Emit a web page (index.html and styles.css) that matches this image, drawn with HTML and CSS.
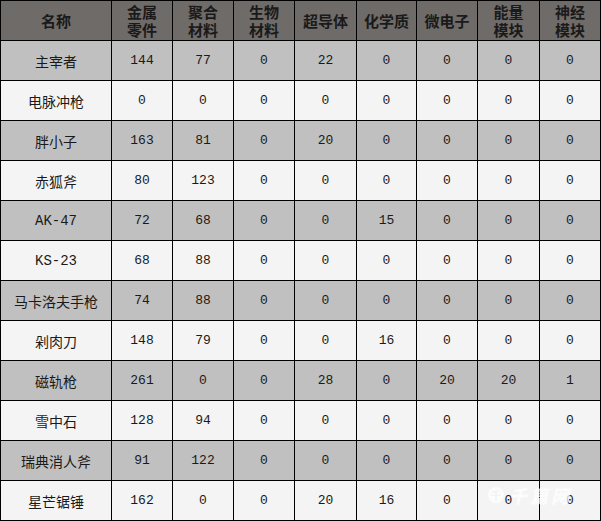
FILE: index.html
```html
<!DOCTYPE html>
<html lang="zh-CN">
<head>
<meta charset="utf-8">
<title>材料表</title>
<link rel="stylesheet" href="styles.css">
</head>
<body>
<div class="wrap">
<table class="mats">
  <colgroup>
    <col class="c-name"><col class="c60"><col class="c60"><col class="c60"><col class="c61"><col class="c59"><col class="c60"><col class="c61"><col class="c60">
  </colgroup>
  <thead>
    <tr>
      <th>名称</th>
      <th><span class="l">金属</span><span class="l">零件</span></th>
      <th><span class="l">聚合</span><span class="l">材料</span></th>
      <th><span class="l">生物</span><span class="l">材料</span></th>
      <th>超导体</th>
      <th>化学质</th>
      <th>微电子</th>
      <th><span class="l">能量</span><span class="l">模块</span></th>
      <th><span class="l">神经</span><span class="l">模块</span></th>
    </tr>
  </thead>
  <tbody>
    <tr class="g"><td class="n">主宰者</td><td>144</td><td>77</td><td>0</td><td>22</td><td>0</td><td>0</td><td>0</td><td>0</td></tr>
    <tr class="w"><td class="n">电脉冲枪</td><td>0</td><td>0</td><td>0</td><td>0</td><td>0</td><td>0</td><td>0</td><td>0</td></tr>
    <tr class="g"><td class="n">胖小子</td><td>163</td><td>81</td><td>0</td><td>20</td><td>0</td><td>0</td><td>0</td><td>0</td></tr>
    <tr class="w"><td class="n">赤狐斧</td><td>80</td><td>123</td><td>0</td><td>0</td><td>0</td><td>0</td><td>0</td><td>0</td></tr>
    <tr class="g"><td class="n">AK-47</td><td>72</td><td>68</td><td>0</td><td>0</td><td>15</td><td>0</td><td>0</td><td>0</td></tr>
    <tr class="w"><td class="n">KS-23</td><td>68</td><td>88</td><td>0</td><td>0</td><td>0</td><td>0</td><td>0</td><td>0</td></tr>
    <tr class="g"><td class="n">马卡洛夫手枪</td><td>74</td><td>88</td><td>0</td><td>0</td><td>0</td><td>0</td><td>0</td><td>0</td></tr>
    <tr class="w"><td class="n">剁肉刀</td><td>148</td><td>79</td><td>0</td><td>0</td><td>16</td><td>0</td><td>0</td><td>0</td></tr>
    <tr class="g"><td class="n">磁轨枪</td><td>261</td><td>0</td><td>0</td><td>28</td><td>0</td><td>20</td><td>20</td><td>1</td></tr>
    <tr class="w"><td class="n">雪中石</td><td>128</td><td>94</td><td>0</td><td>0</td><td>0</td><td>0</td><td>0</td><td>0</td></tr>
    <tr class="g"><td class="n">瑞典消人斧</td><td>91</td><td>122</td><td>0</td><td>0</td><td>0</td><td>0</td><td>0</td><td>0</td></tr>
    <tr class="w"><td class="n">星芒锯锤</td><td>162</td><td>0</td><td>0</td><td>20</td><td>16</td><td>0</td><td>0</td><td>0</td></tr>
  </tbody>
</table>
<div class="mark"><span class="mark-icon">千</span><span class="mark-text">千篇网</span></div>
</div>
</body>
</html>
```

FILE: styles.css
```css
html, body {
  margin: 0;
  padding: 0;
  background: #ffffff;
}

.wrap {
  position: relative;
  width: 601px;
  height: 521px;
}

.mats {
  border-collapse: separate;
  border-spacing: 1px;
  background: #000000;
  table-layout: fixed;
  width: 601px;
}

.c-name { width: 110px; }
.c60 { width: 60px; }
.c61 { width: 61px; }
.c59 { width: 59px; }

.mats th,
.mats td {
  padding: 0;
  height: 39px;
  text-align: center;
  vertical-align: middle;
  overflow: hidden;
  white-space: nowrap;
}

.mats th {
  background: #6f6b68;
  color: #1a1a1a;
  font-family: "Noto Sans CJK SC", "Noto Sans", sans-serif;
  font-weight: 700;
  font-size: 15px;
  line-height: 18px;
}

.mats th .l {
  display: block;
  height: 18px;
}

.mats td {
  color: #1a1a1a;
  font-family: "Liberation Mono", "Noto Sans CJK SC", monospace;
  font-size: 13px;
}

.mats td.n {
  font-size: 14px;
}

.g td { background: #c0c0c0; }
.w td { background: #f4f4f4; }

.mark {
  position: absolute;
  left: 488px;
  top: 485px;
  display: flex;
  align-items: center;
  gap: 5px;
  opacity: 0.75;
  pointer-events: none;
}

.mark-icon {
  width: 16px;
  height: 16px;
  border-radius: 50%;
  background: #ffffff;
  color: #f4f4f4;
  font-family: "Noto Sans CJK SC", sans-serif;
  font-weight: 700;
  font-size: 11px;
  line-height: 16px;
  text-align: center;
}

.mark-text {
  color: #ffffff;
  font-family: "Noto Sans CJK SC", sans-serif;
  font-weight: 900;
  font-style: italic;
  font-size: 18px;
  letter-spacing: 3px;
  line-height: 20px;
}
```
